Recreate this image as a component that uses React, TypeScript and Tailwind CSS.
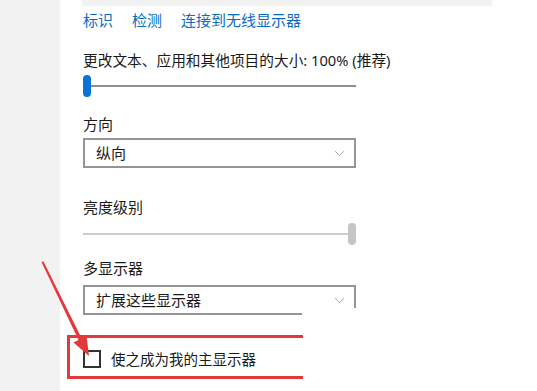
import { ChevronDown } from 'lucide-react';

const font = { fontFamily: '"Segoe UI", "Noto Sans", "Noto Sans CJK SC", sans-serif' };

function Dropdown({ value }: { value: string }) {
  return (
    <div className="flex h-[30px] w-[273px] items-center justify-between border-2 border-[#959595] bg-white pl-[11px] pr-[6px]">
      <span className="text-[15px] leading-5 text-[#1a1a1a]">{value}</span>
      <ChevronDown size={17} strokeWidth={1.1} color="#8c8c8c" />
    </div>
  );
}

export default function App() {
  return (
    <div className="relative flex h-[391px] w-[537px] overflow-hidden bg-white" style={font}>
      {/* left nav strip */}
      <div className="w-[60px] shrink-0 bg-[#f2f2f2]" />

      {/* settings panel */}
      <div className="flex flex-col pl-[23px]">
        <div className="ml-[-1px] h-[6px] w-[410px] bg-[#f2f2f2]" />

        <div className="mt-[4px] flex h-5 items-center gap-[19px] text-[15px] leading-5 text-[#0b6cbf]">
          <span>标识</span>
          <span>检测</span>
          <span>连接到无线显示器</span>
        </div>

        <p className="mt-[20px] h-5 text-[14.7px] leading-5 text-[#1a1a1a]">
          更改文本、应用和其他项目的大小: 100% (推荐)
        </p>

        {/* scale slider */}
        <div className="mt-[5px] flex h-[22px] w-[273px] items-center">
          <div className="h-[22px] w-[8px] rounded-full bg-[#0a74d6]" />
          <div className="h-[2px] flex-1 bg-[#8f8f8f]" />
        </div>

        <p className="mt-[17px] h-5 text-[15px] leading-5 text-[#1a1a1a]">方向</p>
        <div className="mt-[4px]">
          <Dropdown value="纵向" />
        </div>

        <p className="mt-[29px] h-5 text-[15px] leading-5 text-[#1a1a1a]">亮度级别</p>

        {/* brightness slider */}
        <div className="mt-[6px] flex h-[22px] w-[273px] items-center">
          <div className="h-[2px] flex-1 bg-[#cdcdcd]" />
          <div className="h-[22px] w-[8px] rounded-full bg-[#c6c6c6]" />
        </div>

        <p className="mt-[13px] h-5 text-[15px] leading-5 text-[#1a1a1a]">多显示器</p>
        <div className="mt-[7px]">
          <Dropdown value="扩展这些显示器" />
        </div>

        <label className="mt-[34px] flex items-center gap-[10px]">
          <span className="h-[18px] w-[18px] border-2 border-[#333333] bg-white" />
          <span className="text-[14.5px] leading-5 text-[#1a1a1a]">使之成为我的主显示器</span>
        </label>
      </div>

      {/* pasted-over white patch from the edited screenshot */}
      <div className="absolute left-[302px] top-[308px] h-[83px] w-[235px] bg-white" />

      {/* red highlight box */}
      <div className="absolute left-[67px] top-[335px] h-[44px] w-[236px] border-y-[3px] border-l-[3px] border-[#e4393c]" />

      {/* red arrow */}
      <svg className="pointer-events-none absolute left-0 top-0" width="537" height="391">
        <polygon
          points="41.5,262 43.5,261.5 81.5,338 86.5,335.5 89,356 73.5,342.5 78.5,340"
          fill="#e4393c"
        />
      </svg>
    </div>
  );
}
